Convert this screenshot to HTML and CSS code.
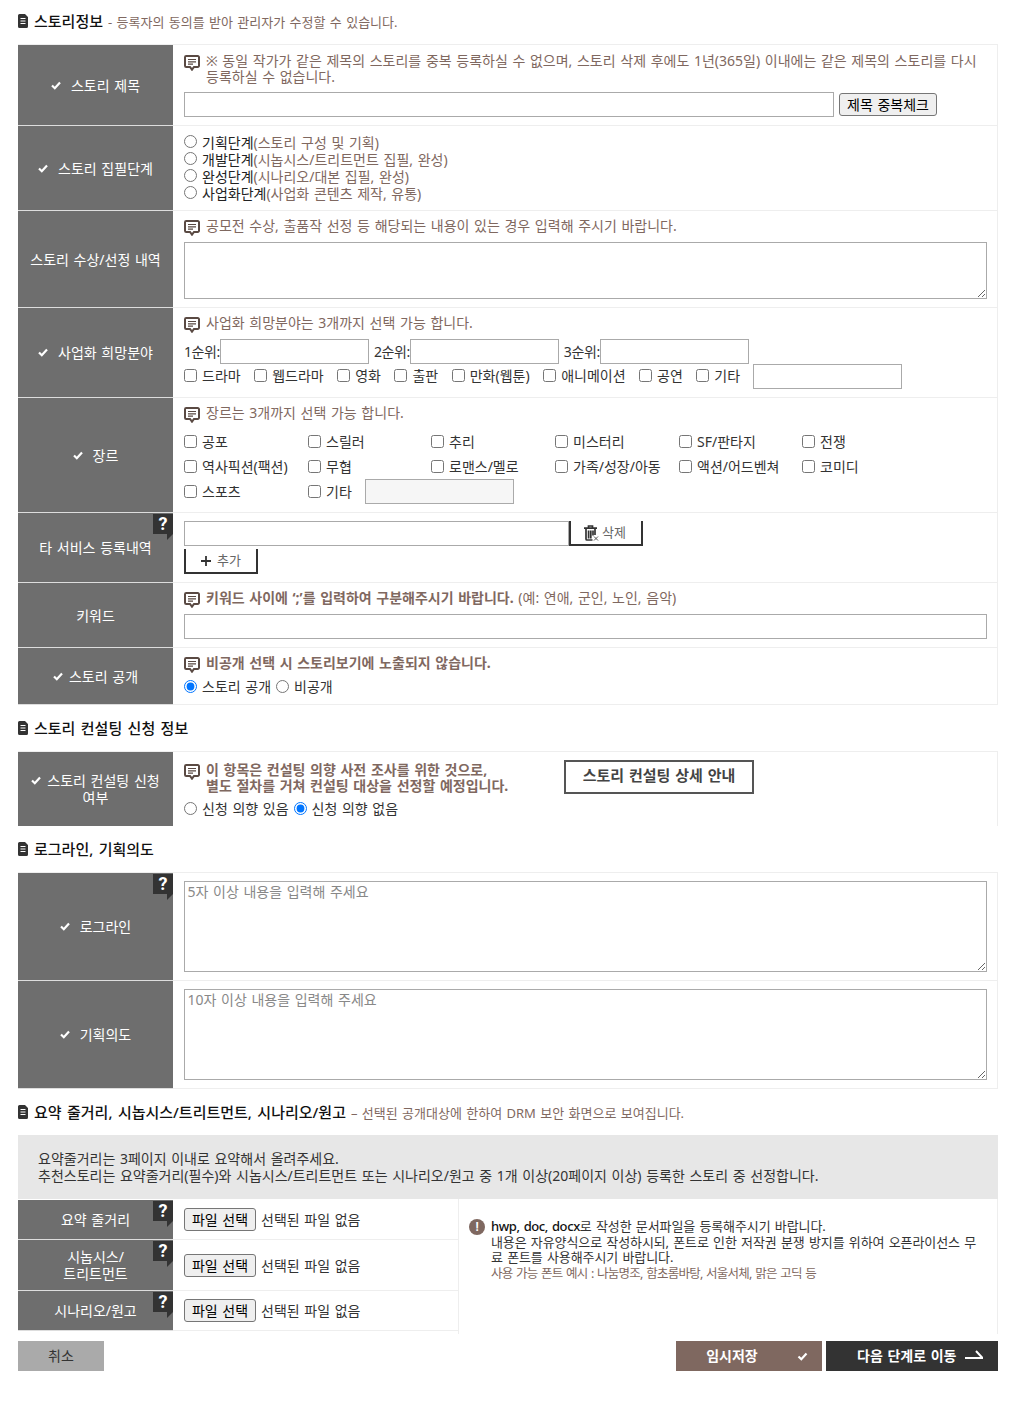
FILE: index.html
```html
<!DOCTYPE html>
<html lang="ko">
<head>
<meta charset="utf-8">
<title>스토리 등록</title>
<link rel="stylesheet" href="styles.css">
</head>
<body>
<svg class="defs" width="0" height="0" aria-hidden="true">
  <symbol id="doc" viewBox="0 0 10 14"><path d="M2 0h5l3 3v9.500a1.500 1.500 0 0 1-1.500 1.500h-7A1.500 1.500 0 0 1 0 12.500v-11A1.500 1.500 0 0 1 1.500 0z" fill="#333"/><path d="M2.500 4.500h5M2.500 7h5M2.500 9.500h5" stroke="#fff" stroke-width="1"/></symbol>
  <symbol id="talk" viewBox="0 0 16 16"><path d="M2.200 1h11.600A1.200 1.200 0 0 1 15 2.200v8.600a1.200 1.200 0 0 1-1.200 1.200H10L8 14.700 6 12H2.200A1.200 1.200 0 0 1 1 10.800V2.200A1.200 1.200 0 0 1 2.200 1z" fill="#fff" stroke="#5a4a43" stroke-width="2"/><path d="M4 4.500h8M4 6.800h8M4 9.100h5" stroke="#5a4a43" stroke-width="1.200"/></symbol>
  <symbol id="check" viewBox="0 0 10 9"><path d="M1 4.500 3.800 7.200 9 1.500" fill="none" stroke="currentColor" stroke-width="2.200"/></symbol>
</svg>
<main class="page">

<h2 class="head"><svg class="doc"><use href="#doc"/></svg><span>스토리정보</span><small>- 등록자의 동의를 받아 관리자가 수정할 수 있습니다.</small></h2>
<table class="form">
  <tr class="h81">
    <th><svg class="chk"><use href="#check"/></svg>스토리 제목</th>
    <td class="pt1">
      <div class="note"><svg class="talk"><use href="#talk"/></svg><p>※ 동일 작가가 같은 제목의 스토리를 중복 등록하실 수 없으며, 스토리 삭제 후에도 1년(365일) 이내에는 같은 제목의 스토리를 다시 등록하실 수 없습니다.</p></div>
      <div class="title-row"><input class="tx w650" type="text"><button class="native w98" type="button">제목 중복체크</button></div>
    </td>
  </tr>
  <tr class="h85">
    <th><svg class="chk"><use href="#check"/></svg>스토리 집필단계</th>
    <td class="pt2">
      <label class="opt"><input type="radio" name="stage"><b>기획단계</b><i>(스토리 구성 및 기획)</i></label>
      <label class="opt"><input type="radio" name="stage"><b>개발단계</b><i>(시놉시스/트리트먼트 집필, 완성)</i></label>
      <label class="opt"><input type="radio" name="stage"><b>완성단계</b><i>(시나리오/대본 집필, 완성)</i></label>
      <label class="opt"><input type="radio" name="stage"><b>사업화단계</b><i>(사업화 콘텐츠 제작, 유통)</i></label>
    </td>
  </tr>
  <tr class="h97">
    <th>스토리 수상/선정 내역</th>
    <td class="pt3">
      <div class="note"><svg class="talk"><use href="#talk"/></svg><p>공모전 수상, 출품작 선정 등 해당되는 내용이 있는 경우 입력해 주시기 바랍니다.</p></div>
      <textarea class="area a57"></textarea>
    </td>
  </tr>
  <tr class="h90">
    <th><svg class="chk"><use href="#check"/></svg>사업화 희망분야</th>
    <td class="pt3">
      <div class="note"><svg class="talk"><use href="#talk"/></svg><p>사업화 희망분야는 3개까지 선택 가능 합니다.</p></div>
      <div class="rank">
        <label>1순위:<input class="tx w149" type="text"></label>
        <label>2순위:<input class="tx w149" type="text"></label>
        <label>3순위:<input class="tx w149" type="text"></label>
      </div>
      <div class="fields">
        <label class="ck"><input type="checkbox">드라마</label>
        <label class="ck"><input type="checkbox">웹드라마</label>
        <label class="ck"><input type="checkbox">영화</label>
        <label class="ck"><input type="checkbox">출판</label>
        <label class="ck"><input type="checkbox">만화(웹툰)</label>
        <label class="ck"><input type="checkbox">애니메이션</label>
        <label class="ck"><input type="checkbox">공연</label>
        <label class="ck"><input type="checkbox">기타</label>
        <input class="tx w149" type="text">
      </div>
    </td>
  </tr>
  <tr class="h115">
    <th><svg class="chk"><use href="#check"/></svg>장르</th>
    <td class="pt3">
      <div class="note"><svg class="talk"><use href="#talk"/></svg><p>장르는 3개까지 선택 가능 합니다.</p></div>
      <div class="genres">
        <label class="ck"><input type="checkbox">공포</label>
        <label class="ck"><input type="checkbox">스릴러</label>
        <label class="ck"><input type="checkbox">추리</label>
        <label class="ck"><input type="checkbox">미스터리</label>
        <label class="ck"><input type="checkbox">SF/판타지</label>
        <label class="ck"><input type="checkbox">전쟁</label>
        <label class="ck"><input type="checkbox">역사픽션(팩션)</label>
        <label class="ck"><input type="checkbox">무협</label>
        <label class="ck"><input type="checkbox">로맨스/멜로</label>
        <label class="ck"><input type="checkbox">가족/성장/아동</label>
        <label class="ck"><input type="checkbox">액션/어드벤쳐</label>
        <label class="ck"><input type="checkbox">코미디</label>
        <label class="ck"><input type="checkbox">스포츠</label>
        <div class="other"><label class="ck"><input type="checkbox">기타</label><input class="tx w149 off" type="text" disabled></div>
      </div>
    </td>
  </tr>
  <tr class="h70">
    <th class="tip">타 서비스 등록내역<span class="q">?</span></th>
    <td class="pt4">
      <div class="svc"><input class="tx w385" type="text"><button class="open w74 del" type="button"><svg class="trash" viewBox="0 0 16 16"><path d="M5.500 2.500V1h4v1.500M1 3.200h13M3 3.500V14a1 1 0 0 0 1 1h5.500M12 3.500V10M5.600 5.500v8M7.800 5.500v8M10 5.500v5" fill="none" stroke="#333" stroke-width="1.700"/><path d="M11 11.500l4 4M15 11.500l-4 4" stroke="#555" stroke-width="1"/></svg>삭제</button></div>
      <button class="open w74 add" type="button"><svg class="plus" viewBox="0 0 10 10"><path d="M5 0v10M0 5h10" stroke="#333" stroke-width="1.800"/></svg>추가</button>
    </td>
  </tr>
  <tr class="h65">
    <th>키워드</th>
    <td class="pt3">
      <div class="note"><svg class="talk"><use href="#talk"/></svg><p><strong>키워드 사이에 ‘;’를 입력하여 구분해주시기 바랍니다.</strong> (예: 연애, 군인, 노인, 음악)</p></div>
      <input class="tx wfull gap6" type="text">
    </td>
  </tr>
  <tr class="h57">
    <th><svg class="chk tight"><use href="#check"/></svg>스토리 공개</th>
    <td class="pt3">
      <div class="note"><svg class="talk"><use href="#talk"/></svg><p><strong>비공개 선택 시 스토리보기에 노출되지 않습니다.</strong></p></div>
      <div class="radios r5"><label class="opt"><input type="radio" name="open" checked>스토리 공개</label><label class="opt"><input type="radio" name="open">비공개</label></div>
    </td>
  </tr>
</table>

<h2 class="head"><svg class="doc"><use href="#doc"/></svg><span>스토리 컨설팅 신청 정보</span></h2>
<table class="form open-end">
  <tr class="h75">
    <th><svg class="chk tight"><use href="#check"/></svg>스토리 컨설팅 신청<br>여부</th>
    <td class="pt6">
      <div class="consult">
        <div class="note"><svg class="talk"><use href="#talk"/></svg><p class="wrap306"><strong>이 항목은 컨설팅 의향 사전 조사를 위한 것으로, 별도 절차를 거쳐 컨설팅 대상을 선정할 예정입니다.</strong></p></div>
        <a class="guide">스토리 컨설팅 상세 안내</a>
      </div>
      <div class="radios r6"><label class="opt"><input type="radio" name="con">신청 의향 있음</label><label class="opt"><input type="radio" name="con" checked>신청 의향 없음</label></div>
    </td>
  </tr>
</table>

<h2 class="head"><svg class="doc"><use href="#doc"/></svg><span>로그라인, 기획의도</span></h2>
<table class="form">
  <tr class="h108">
    <th class="tip"><svg class="chk"><use href="#check"/></svg>로그라인<span class="q">?</span></th>
    <td class="pt5"><textarea class="area a91" placeholder="5자 이상 내용을 입력해 주세요"></textarea></td>
  </tr>
  <tr class="h108">
    <th><svg class="chk"><use href="#check"/></svg>기획의도</th>
    <td class="pt5"><textarea class="area a91" placeholder="10자 이상 내용을 입력해 주세요"></textarea></td>
  </tr>
</table>

<h2 class="head"><svg class="doc"><use href="#doc"/></svg><span>요약 줄거리, 시놉시스/트리트먼트, 시나리오/원고</span><small>– 선택된 공개대상에 한하여 DRM 보안 화면으로 보여집니다.</small></h2>
<div class="notice">
  <p>요약줄거리는 3페이지 이내로 요약해서 올려주세요.</p>
  <p>추천스토리는 요약줄거리(필수)와 시놉시스/트리트먼트 또는 시나리오/원고 중 1개 이상(20페이지 이상) 등록한 스토리 중 선정합니다.</p>
</div>
<section class="files">
  <div class="file-rows">
    <div class="file-row fr40"><div class="file-th">요약 줄거리<span class="q">?</span></div><div class="file-td"><button class="native w72" type="button">파일 선택</button><span>선택된 파일 없음</span></div></div>
    <div class="file-row fr51"><div class="file-th">시놉시스/<br>트리트먼트<span class="q">?</span></div><div class="file-td"><button class="native w72" type="button">파일 선택</button><span>선택된 파일 없음</span></div></div>
    <div class="file-row fr40"><div class="file-th">시나리오/원고<span class="q">?</span></div><div class="file-td"><button class="native w72" type="button">파일 선택</button><span>선택된 파일 없음</span></div></div>
  </div>
  <div class="file-help">
    <span class="alert">!</span>
    <div class="help-text">
      <p><strong>hwp, doc, docx</strong>로 작성한 문서파일을 등록해주시기 바랍니다.</p>
      <p>내용은 자유양식으로 작성하시되, 폰트로 인한 저작권 분쟁 방지를 위하여 오픈라이선스 무료 폰트를 사용해주시기 바랍니다.</p>
      <p class="muted">사용 가능 폰트 예시 : 나눔명조, 함초롬바탕, 서울서체, 맑은 고딕 등</p>
    </div>
  </div>
</section>
<div class="actions">
  <a class="btn cancel">취소</a>
  <a class="btn save">임시저장<svg class="save-chk"><use href="#check"/></svg></a>
  <a class="btn next">다음 단계로 이동<svg class="arrow" viewBox="0 0 18 12"><path d="M0 9h17.500L11 2" fill="none" stroke="#fff" stroke-width="2"/></svg></a>
</div>
</main>
</body>
</html>
```
FILE: styles.css
```css
* { box-sizing: border-box; }
html, body { margin: 0; padding: 0; background: #fff; }
body {
  font-family: "Noto Sans", "Noto Sans CJK KR", sans-serif;
  font-size: 14px;
  line-height: 17px;
  color: #333;
  word-spacing: 1px;
}
.defs { position: absolute; }
.page { width: 998px; padding: 11px 0 30px 18px; }
p { margin: 0; }

.head {
  display: flex;
  align-items: center;
  height: 20px;
  margin: 13px 0;
  font-size: 15px;
  font-weight: 500;
  color: #111;
  word-spacing: 1.500px;
}
.page > .head:first-child { margin-top: 0; }
.doc { width: 10px; height: 14px; margin-right: 6px; flex: none; }
.head small { margin: 2px 0 0 5px; font-size: 13px; font-weight: 400; color: #7f6860; word-spacing: 1px; }

.form {
  width: 980px;
  table-layout: fixed;
  border-collapse: separate;
  border-spacing: 0;
  border-top: 1px solid #eee;
}
.form th {
  position: relative;
  width: 155px;
  padding: 0 6px;
  background: #6e6e6e;
  border-bottom: 1px solid #ddd;
  color: #fff;
  font-size: 14px;
  font-weight: 400;
  text-align: center;
}
.form td {
  vertical-align: top;
  padding-left: 11px;
  padding-right: 10px;
  border-bottom: 1px solid #eee;
  border-right: 1px solid #eee;
}
.open-end th, .open-end td { border-bottom: 0; }
.h81 td, .h81 th { height: 81px; }
.h85 td, .h85 th { height: 85px; }
.h97 td, .h97 th { height: 97px; }
.h90 td, .h90 th { height: 90px; }
.h115 td, .h115 th { height: 115px; }
.h70 td, .h70 th { height: 70px; }
.h65 td, .h65 th { height: 65px; }
.h57 td, .h57 th { height: 57px; }
.h75 td, .h75 th { height: 74px; }
.h108 td, .h108 th { height: 108px; }
.form td.pt1 { padding-top: 8px; }
.form td.pt2 { padding-top: 8px; }
.form td.pt3 { padding-top: 7px; }
.form td.pt4 { padding-top: 8px; }
.form td.pt5 { padding-top: 8px; }
.form td.pt6 { padding-top: 10px; }

.chk { width: 10px; height: 9px; margin-right: 10px; color: #fff; vertical-align: 1px; }
.chk.tight { margin-right: 6px; }

.note { display: flex; color: #7f6860; line-height: 15.500px; }
.talk { width: 16px; height: 16px; margin: 2px 6px 0 0; flex: none; }
.note strong { font-weight: 700; }
.wrap306 { width: 306px; word-break: keep-all; }

.tx, .area {
  display: block;
  margin: 0;
  padding: 1px 2px;
  border: 1px solid #aaa;
  border-radius: 0;
  background: #fff;
  font: inherit;
}
.tx { height: 25px; }
.area { width: 803px; padding: 1px 3px 3px 2.500px; color: #333; word-spacing: 1px; }
.area::placeholder { color: #888; }
.a57 { height: 57px; margin-top: 6px; }
.a91 { height: 91px; }
.w650 { width: 650px; }
.w149 { width: 149px; }
.w385 { width: 385px; }
.wfull { width: 803px; }
.gap6 { margin-top: 6px; }
.off { background: #f6f6f6; }

.title-row { display: flex; align-items: center; gap: 5px; margin-top: 8px; }
.native {
  height: 23px;
  padding: 0;
  border: 1px solid #767676;
  border-radius: 3px;
  background: #efefef;
  color: #000;
  font: inherit;
  word-spacing: inherit;
}
.w98 { width: 98px; }
.w72 { width: 72px; }

.opt { display: flex; align-items: flex-start; }
.opt input { width: 13px; height: 13px; margin: 1px 5px 0 0; }
.opt b { font-weight: 400; color: #222; }
.opt i { font-style: normal; color: #7f6860; }

.rank { display: flex; margin-top: 6px; gap: 5px; height: 25px; }
.rank label { display: flex; align-items: center; color: #333; letter-spacing: -0.400px; }
.fields { display: flex; align-items: center; height: 25px; }
.ck { display: inline-flex; align-items: center; white-space: nowrap; }
.ck input { width: 13px; height: 13px; margin: 0 5px 0 0; }
.fields .ck { margin: -2px 13.500px 0 0; }
.fields .tx { margin-left: -1px; }

.genres {
  display: grid;
  grid-template-columns: 124px 123px 124px 124px 123px 1fr;
  grid-auto-rows: 25px;
  margin-top: 6px;
  align-items: center;
}
.other { display: flex; align-items: center; grid-column: span 5; }
.other .ck { width: 57px; }

.svc { display: flex; height: 25px; }
.open {
  display: inline-flex;
  align-items: center;
  justify-content: center;
  height: 25px;
  padding: 0;
  border: 2px solid #333;
  border-top: 0;
  background: #fff;
  color: #666;
  font: inherit;
  font-size: 13px;
  word-spacing: inherit;
}
.w74 { width: 74px; }
.add { margin-top: 3px; }
.del { padding-right: 3px; }
.trash { width: 16px; height: 16px; margin-right: 3px; }
.plus { width: 10px; height: 10px; margin-right: 6px; }

.q {
  position: absolute;
  top: 1px;
  right: 0;
  width: 20px;
  height: 20px;
  background: #333;
  color: #fff;
  font: 700 18px/20px "Roboto", sans-serif;
  text-align: center;
}
.q::after {
  content: "";
  position: absolute;
  right: 0;
  top: 20px;
  border-style: solid;
  border-width: 6px 0 0 6px;
  border-color: #333 transparent transparent transparent;
  transform: scaleX(-1);
}

.radios { display: flex; gap: 5px; }
.r5 { margin-top: 5px; }
.r6 { margin-top: 6px; }
.r6 .opt input, .r5 .opt input { margin-top: 2px; }

.consult { display: flex; }
.consult .note { width: 380px; }
.guide {
  display: flex;
  align-items: center;
  justify-content: center;
  width: 190px;
  height: 34px;
  margin-top: -2px;
  padding-bottom: 4px;
  border: 2px solid #555;
  color: #444;
  font-size: 15px;
  font-weight: 700;
}

.notice {
  height: 64px;
  padding: 15px 20px 0;
  background: #e7e7e7;
}
.files { display: grid; grid-template-columns: 440px 1fr; height: 135px; }
.file-row { display: flex; border-bottom: 1px solid #eee; }
.file-row.fr40 { height: 40px; }
.file-row.fr51 { height: 51px; }
.file-rows { padding-top: 1px; }
.file-th {
  position: relative;
  display: flex;
  align-items: center;
  justify-content: center;
  width: 155px;
  background: #6e6e6e;
  color: #fff;
  text-align: center;
  border-bottom: 1px solid #ddd;
  margin-bottom: -1px;
}
.file-td { display: flex; align-items: center; gap: 5px; padding-left: 11px; }
.file-help {
  display: flex;
  padding: 20px 18px 0 10px;
  border-left: 1px solid #eee;
  border-right: 1px solid #eee;
  font-size: 13px;
  line-height: 15.500px;
  letter-spacing: -0.100px;
}
.alert {
  flex: none;
  width: 16px;
  height: 16px;
  margin-right: 6px;
  border-radius: 50%;
  background: #7f6860;
  color: #fff;
  font: 700 12px/16px "Roboto", sans-serif;
  text-align: center;
}
.help-text strong { font-weight: 500; color: #111; letter-spacing: -0.400px; }
.muted { color: #7f6860; font-size: 12.500px; letter-spacing: -0.750px; }

.actions { display: flex; gap: 4px; margin-top: 7px; }
.btn {
  display: flex;
  align-items: center;
  height: 30px;
  padding-bottom: 2px;
  font-size: 14px;
}
.cancel { justify-content: center; width: 86px; margin-right: auto; background: #aaa; color: #333; }
.save {
  position: relative;
  justify-content: center;
  width: 146px;
  padding-right: 34px;
  background: #7f6860;
  color: #fff;
  font-weight: 700;
}
.save-chk { position: absolute; right: 14px; top: 11px; width: 11px; height: 9px; color: #fff; }
.next {
  justify-content: flex-start;
  width: 172px;
  padding-left: 31px;
  background: #333;
  color: #fff;
  font-weight: 700;
}
.arrow { width: 18px; height: 12px; margin-left: 9px; }
```
